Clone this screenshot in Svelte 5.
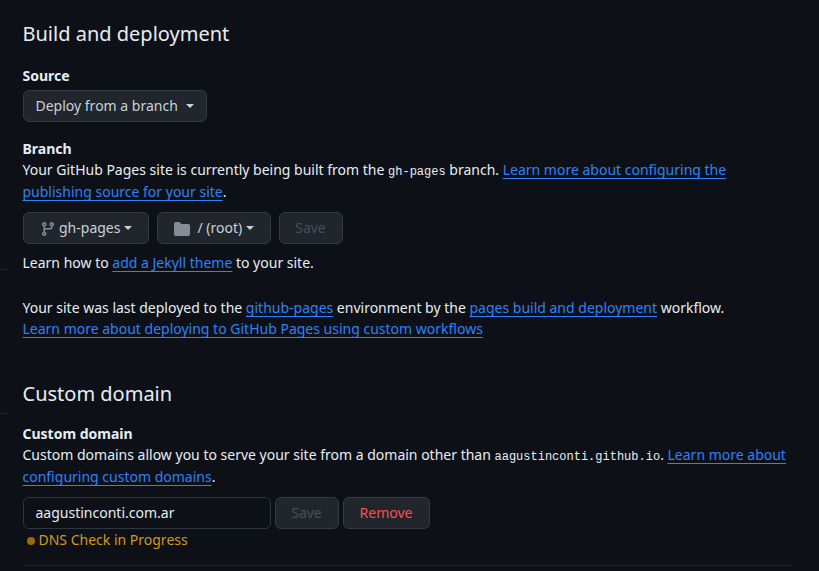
<script>
  let domain = $state('aagustinconti.com.ar');
</script>

<div class="page">
  <aside><div class="rule first"></div><div class="rule second"></div></aside>
  <main>
    <section class="build">
      <h2>Build and deployment</h2>
      <h3>Source</h3>
      <button class="btn source">Deploy from a branch<i class="caret"></i></button>
      <h3 class="branch">Branch</h3>
      <p>
        Your GitHub Pages site is currently being built from the <code>gh-pages</code> branch.
        <a href="#configure">Learn more about configuring the publishing source for your site</a>.
      </p>
      <div class="row selectors">
        <button class="btn ref">
          <svg class="fork" viewBox="0 0 16 16" width="16" height="16"><path d="M9.5 3.25a2.25 2.25 0 1 1 3 2.122V6A2.5 2.5 0 0 1 10 8.5H6a1 1 0 0 0-1 1v1.128a2.251 2.251 0 1 1-1.5 0V5.372a2.25 2.25 0 1 1 1.5 0v1.836A2.493 2.493 0 0 1 6 7h4a1 1 0 0 0 1-1v-.628A2.25 2.25 0 0 1 9.5 3.25Zm-6 0a.75.75 0 1 0 1.5 0 .75.75 0 0 0-1.5 0Zm8.25-.75a.75.75 0 1 0 0 1.5.75.75 0 0 0 0-1.5ZM4.25 12a.75.75 0 1 0 0 1.5.75.75 0 0 0 0-1.5Z" /></svg>
          <span>gh-pages</span><i class="caret"></i>
        </button>
        <button class="btn dir">
          <svg class="folder" viewBox="0 0 16 16" width="16" height="16"><path d="M1.75 1A1.75 1.75 0 0 0 0 2.75v10.5C0 14.216.784 15 1.75 15h12.5A1.75 1.75 0 0 0 16 13.25v-8.5A1.75 1.75 0 0 0 14.25 3H7.5a.25.25 0 0 1-.2-.1l-.9-1.2C6.07 1.26 5.55 1 5 1H1.75Z" /></svg>
          <span>/ (root)</span><i class="caret"></i>
        </button>
        <button class="btn save" disabled>Save</button>
      </div>
      <p class="jekyll">Learn how to <a href="#jekyll">add a Jekyll theme</a> to your site.</p>
      <p class="deployed">
        Your site was last deployed to the <a href="#environment">github-pages</a> environment by the
        <a href="#workflow">pages build and deployment</a> workflow.<br />
        <a href="#workflows">Learn more about deploying to GitHub Pages using custom workflows</a>
      </p>
    </section>
    <section class="domain">
      <h2>Custom domain</h2>
      <h3>Custom domain</h3>
      <p>
        Custom domains allow you to serve your site from a domain other than <code>aagustinconti.github.io</code>.
        <a href="#domains">Learn more about configuring custom domains</a>.
      </p>
      <div class="row form">
        <input type="text" aria-label="Custom domain" bind:value={domain} />
        <button class="btn save" disabled>Save</button>
        <button class="btn remove">Remove</button>
      </div>
      <div class="status"><span class="dot"></span>DNS Check in Progress</div>
    </section>
  </main>
</div>

<style>
  :global(body) { background: #0d1117; }
  .page {
    display: flex;
    gap: 15.5px;
    height: 571px;
    overflow: hidden;
    box-sizing: border-box;
    background: #0d1117;
    color: #e6edf3;
    font: 14px/21px "Noto Sans", sans-serif;
  }
  aside { width: 7px; flex: none; }
  .rule { height: 1px; background: #21262d; }
  .first { margin-top: 269px; }
  .second { margin-top: 143px; }
  main { width: 768px; flex: none; padding-top: 19px; }
  h2 { margin: 0 0 16px; font-size: 20px; font-weight: 400; line-height: 30px; }
  h3 { margin: 0; font-size: 14px; font-weight: 700; line-height: 21px; }
  p { margin: 0; line-height: 21.5px; }
  a { color: #2f81f7; text-decoration: underline; text-underline-offset: 3px; text-decoration-skip-ink: none; }
  code { font: 12px/1 "Liberation Mono", monospace; }
  .btn {
    display: flex;
    align-items: center;
    box-sizing: border-box;
    height: 32px;
    padding: 0 12px;
    border: 1px solid #363b42;
    border-radius: 6px;
    background: #21262d;
    color: #c9d1d9;
    font: 14px/20px "Noto Sans", sans-serif;
    white-space: nowrap;
  }
  .source { width: 184px; margin-top: 4px; }
  .source .caret { margin-left: 8px; }
  .caret { border: 4px solid transparent; border-top-color: currentColor; border-bottom: 0; }
  .branch { margin-top: 16px; }
  .row { display: flex; }
  .selectors { gap: 8px; margin-top: 10px; }
  svg { fill: #848d97; flex: none; margin-top: 2px; }
  .ref { width: 126px; padding-left: 16px; }
  .ref span { margin: 0 4px 0 3.5px; }
  .dir { width: 114px; padding-left: 16px; }
  .dir span { margin: 0 3.5px 0 8px; }
  .save { width: 64px; justify-content: center; color: #484f58; }
  .jekyll { margin-top: 8px; line-height: 21px; }
  .deployed { margin-top: 24px; line-height: 21px; }
  .domain { margin-top: 40px; height: 186px; border-bottom: 1px solid #21262d; }
  .domain h2 { margin-bottom: 14px; }
  .form { gap: 4px; margin-top: 10px; }
  input {
    box-sizing: border-box;
    width: 248px;
    height: 32px;
    margin: 0;
    padding: 0 12px 1px;
    border: 1px solid #30363d;
    border-radius: 6px;
    background: #0d1117;
    color: #e6edf3;
    font: 14px/20px "Noto Sans", sans-serif;
    outline: 0;
  }
  .remove { width: 87px; justify-content: center; color: #f85149; }
  .status { display: flex; align-items: center; gap: 4px; padding-left: 4px; color: #d29922; }
  .dot { width: 8px; height: 8px; margin-top: 2px; border-radius: 50%; background: #9e6a03; }
</style>
